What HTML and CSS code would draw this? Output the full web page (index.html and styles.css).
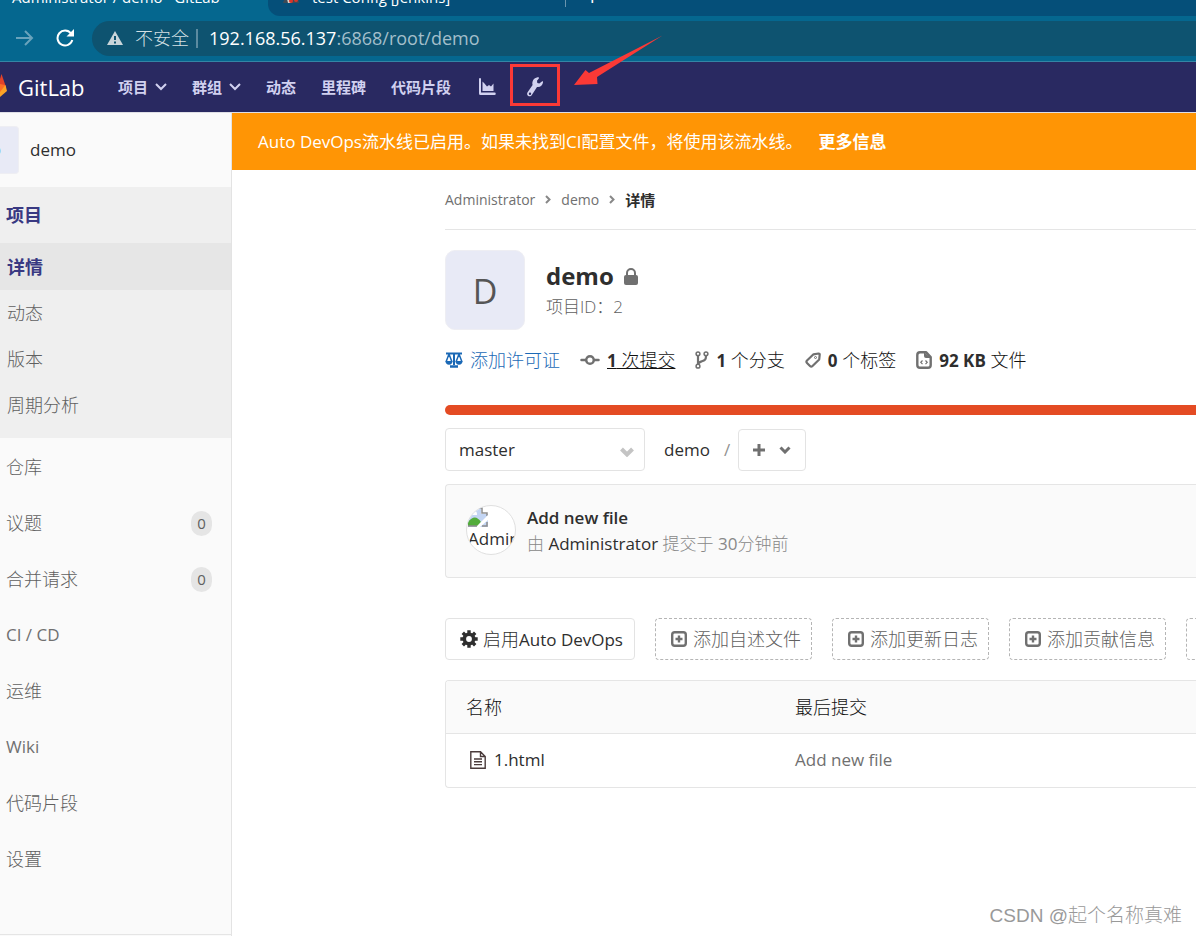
FILE: index.html
```
<!DOCTYPE html>
<html lang="zh-CN">
<head>
<meta charset="utf-8">
<title>Administrator / demo · GitLab</title>
<link rel="stylesheet" href="styles.css">
</head>
<body>
<div class="browser">
  <div class="tabs">
    <div class="tab tab-active"><span class="tab-title">Administrator / demo · GitLab</span></div>
    <div class="tab-rest">
      <div class="tab">
        <svg class="tab-icon" width="18" height="18" viewBox="0 0 18 18"><path fill="#3d4a56" d="M1 17c1-4 3-5 4-6h8c3 1 4 3 4 6z"/><path fill="#d9d2cb" d="M5 13l3-2 2 2-1 4H6z"/><circle cx="9" cy="15" r="2" fill="#d8352a"/><circle cx="14" cy="14" r="2" fill="#d8352a"/></svg>
        <span class="tab-title">test Config [Jenkins]</span>
      </div>
      <span class="tab-plus">+</span>
    </div>
  </div>
  <div class="address-row">
    <svg class="nav-forward" width="18" height="16" viewBox="0 0 18 16" fill="none" stroke="#69a3bc" stroke-width="2"><path d="M0 8h16M9 1l7 7-7 7"/></svg>
    <svg class="nav-reload" width="18" height="18" viewBox="0 0 18 18"><path fill="none" stroke="#fff" stroke-width="2" d="M15 4.500A7.500 7.500 0 1 0 16.300 11"/><path fill="#fff" d="M18 0v7.500h-7.500z"/></svg>
    <div class="address">
      <svg width="16" height="14" viewBox="0 0 16 14"><path fill="#c9d5da" d="M8 0l8 14H0z"/><path stroke="#0e5370" stroke-width="2" d="M8 5v4M8 10.500v2"/></svg>
      <span class="insecure">不安全</span>
      <span class="address-sep"></span>
      <span class="url"><b>192.168.56.137</b>:6868/root/demo</span>
    </div>
  </div>
</div>

<header class="navbar">
  <svg class="logo" width="7" height="26" viewBox="0 0 7 26"><path fill="#e24329" d="M0 5L1.500 0 6 13 0 14z"/><path fill="#fc6d26" d="M0 10l5 1 1 4-6 7z"/><path fill="#fca326" d="M5.500 11L7 17 0 23v-5z"/></svg>
  <span class="brand">GitLab</span>
  <nav class="top-links">
    <button class="nav-item">项目<svg width="12" height="8" viewBox="0 0 12 8"><path d="M1 1l5 5 5-5"/></svg></button>
    <button class="nav-item">群组<svg width="12" height="8" viewBox="0 0 12 8"><path d="M1 1l5 5 5-5"/></svg></button>
    <a class="nav-item" href="#">动态</a>
    <a class="nav-item" href="#">里程碑</a>
    <a class="nav-item" href="#">代码片段</a>
    <a class="nav-item chart" href="#" aria-label="统计"><svg class="filled" width="18" height="18" viewBox="0 0 18 18"><path d="M1 1a1 1 0 0 1 2 0v13.500h13.500a1 1 0 0 1 0 2.500H2.500Q1 17 1 15.500zM4.500 3.500l2 2 2.500 3 2-1.500 2 1.500 2.500-3V13h-11z"/></svg></a>
    <a class="nav-item admin" href="#" aria-label="管理"><svg class="filled" width="20" height="20" viewBox="0 0 20 20"><path fill-rule="evenodd" d="M12.500.3c1.300-.3 1.900.5 1.300 1.300L12 3.700l.3 2.200 2 .7 2.600-2.200c.7-.5 1.300 0 1.100 1.100-.5 3-2.800 4.900-6 4.400L7 17.700c-.9 1.500-2.300 2-3.700 1.200-1.300-.8-1.600-2.200-.7-3.600L7.600 8C6.600 4.500 8.700 1.100 12.500.3zM5 15.500a1.200 1.200 0 1 0 0 2.400 1.200 1.200 0 0 0 0-2.400z"/></svg></a>
  </nav>
</header>

<div class="page">
  <aside class="sidebar">
    <a class="context" href="#"><span class="context-avatar">D</span><span>demo</span></a>
    <nav>
      <div class="side-group">
        <a class="side-link side-head" href="#">项目</a>
        <a class="side-sub current" href="#">详情</a>
        <a class="side-sub" href="#">动态</a>
        <a class="side-sub" href="#">版本</a>
        <a class="side-sub" href="#">周期分析</a>
      </div>
      <div class="side-rest">
        <a class="side-link" href="#">仓库</a>
        <a class="side-link" href="#">议题<span class="count">0</span></a>
        <a class="side-link" href="#">合并请求<span class="count">0</span></a>
        <a class="side-link latin" href="#">CI / CD</a>
        <a class="side-link" href="#">运维</a>
        <a class="side-link latin" href="#">Wiki</a>
        <a class="side-link" href="#">代码片段</a>
        <a class="side-link" href="#">设置</a>
      </div>
    </nav>
    <div class="side-footer"></div>
  </aside>

  <main class="main">
    <div class="banner">Auto DevOps流水线已启用。如果未找到CI配置文件，将使用该流水线。<a href="#">更多信息</a></div>
    <div class="content">
      <nav class="crumbs">
        <a href="#">Administrator</a>
        <svg width="6" height="9" viewBox="0 0 6 9"><path d="M1 1l3.500 3.500L1 8"/></svg>
        <a href="#">demo</a>
        <svg width="6" height="9" viewBox="0 0 6 9"><path d="M1 1l3.500 3.500L1 8"/></svg>
        <strong>详情</strong>
      </nav>

      <section class="project">
        <div class="avatar">D</div>
        <div>
          <h1>demo <svg width="14" height="17" viewBox="0 0 14 17"><path fill="none" stroke="#707070" stroke-width="2" d="M3 8V5a4 4 0 0 1 8 0v3"/><rect y="7" width="14" height="10" rx="2" fill="#707070"/></svg></h1>
          <p class="project-id">项目ID：2</p>
        </div>
      </section>

      <div class="stats">
        <a class="license" href="#"><svg width="18" height="16" viewBox="0 0 18 16"><g fill="none" stroke="#1b69b6"><path stroke-width="2" d="M1 1.500h16M9 1v12"/><path stroke-width="2.500" d="M5 14.500h8"/><path stroke-width="1.500" d="M4 2L1.200 9.500M4 2l2.800 7.500M14 2l-2.800 7.500M14 2l2.800 7.500"/></g><path fill="#1b69b6" d="M.3 9h7.400q-.5 3.700-3.700 3.700T.3 9zM10.300 9h7.400q-.5 3.700-3.700 3.700T10.300 9z"/></svg>添加许可证</a>
        <a class="stat underlined" href="#"><svg width="20" height="12" viewBox="0 0 20 12" fill="none" stroke="#707070" stroke-width="2.500"><circle cx="10" cy="6" r="3.800"/><path stroke-width="2.500" stroke-linecap="round" d="M1.500 6H5M15 6h3.500"/></svg><span><b>1</b> 次提交</span></a>
        <a class="stat" href="#"><svg width="14" height="18" viewBox="0 0 14 18" fill="none" stroke="#707070"><circle cx="3" cy="2.800" r="1.900" stroke-width="1.500"/><circle cx="11" cy="2.800" r="1.900" stroke-width="1.500"/><circle cx="3" cy="15.200" r="1.900" stroke-width="1.500"/><path stroke-width="2.200" d="M3 5v8M11 5c0 4-1.500 4.500-4 5.200-2.500.8-3.500 1-3.900 3"/></svg><span><b>1</b> 个分支</span></a>
        <a class="stat" href="#"><svg width="16" height="16" viewBox="0 0 16 16" fill="none" stroke="#707070" stroke-width="2.200"><path stroke-linejoin="round" d="M8.500 2.300L13.500 1.500c.9-.1 1.300.4 1.200 1.200L14.200 7.500 7.500 14c-.8.8-1.800.7-2.500 0L2 11c-.7-.7-.7-1.700 0-2.500z"/><circle cx="10.500" cy="5.500" r="1" stroke-width="1"/></svg><span><b>0</b> 个标签</span></a>
        <a class="stat" href="#"><svg width="16" height="18" viewBox="0 0 16 18" fill="none" stroke="#707070" stroke-width="2.400"><path stroke-linejoin="round" d="M4 1.200h6L14.700 6v8q0 2.800-2.700 2.800H4q-2.700 0-2.700-2.800V4Q1.300 1.200 4 1.200z"/><path fill="#707070" stroke="none" d="M8 1l7 6H10q-2 0-2-2z"/><path stroke-width="1.200" d="M6.500 9.500l-1.700 1.800 1.700 1.800M9.500 9.500l1.700 1.800-1.700 1.800"/></svg><span><b>92 KB</b> 文件</span></a>
      </div>

      <div class="language-bar"></div>

      <div class="tree-controls">
        <label class="branch"><select aria-label="分支"><option>master</option></select><svg width="14" height="10" viewBox="0 0 14 10"><path d="M1.500 2L7 7.500 12.500 2"/></svg></label>
        <a class="path" href="#">demo</a>
        <span class="slash">/</span>
        <button class="add-button" aria-label="添加"><svg width="12" height="12" viewBox="0 0 12 12"><path d="M6 0v12M0 6h12"/></svg><svg width="12" height="8" viewBox="0 0 12 8"><path d="M1.500 1.500L6 6l4.500-4.500"/></svg></button>
      </div>

      <section class="commit">
        <div class="commit-avatar">
          <svg width="20" height="20" viewBox="0 0 20 20"><path fill="#c3d5f3" d="M0 0h14l6 6v14H0z"/><path fill="#fff" d="M3 7a3 3 0 0 1 6 0v1H2zM13 0h2l5 5v2h-7z"/><path fill="none" stroke="#8d8d8d" stroke-width="1.500" d="M0 1h14v5h5v3"/><path fill="#52ac3b" d="M0 19v-4q7-9 13 0l-3 4z"/><path fill="#fff" d="M20 8v5l-8 7H8z"/><path fill="none" stroke="#8d8d8d" stroke-width="1.500" d="M0 19h9M14 19h5v-4"/></svg>
          <span>Admin</span>
        </div>
        <div>
          <a class="commit-title" href="#">Add new file</a>
          <p class="commit-meta"><span>由</span> <a href="#">Administrator</a> <span>提交于</span> 30<span>分钟前</span></p>
        </div>
      </section>

      <div class="actions">
        <a class="action solid" href="#"><svg width="18" height="18" viewBox="0 0 18 18"><circle cx="9" cy="9" r="4.700" fill="none" stroke="#2e2e2e" stroke-width="3.600"/><path stroke="#2e2e2e" stroke-width="3.400" d="M9 .3v3M9 14.700v3M.3 9h3M14.700 9h3M2.800 2.800l2.200 2.200M13 13l2.200 2.200M2.800 15.200L5 13M13 5l2.200-2.200"/></svg><span>启用<span class="latin">Auto DevOps</span></span></a>
        <a class="action" href="#"><svg width="16" height="16" viewBox="0 0 16 16"><rect x="1.200" y="1.200" width="13.600" height="13.600" rx="2.500"/><path d="M8 4.500v7M4.500 8h7"/></svg>添加自述文件</a>
        <a class="action" href="#"><svg width="16" height="16" viewBox="0 0 16 16"><rect x="1.200" y="1.200" width="13.600" height="13.600" rx="2.500"/><path d="M8 4.500v7M4.500 8h7"/></svg>添加更新日志</a>
        <a class="action" href="#"><svg width="16" height="16" viewBox="0 0 16 16"><rect x="1.200" y="1.200" width="13.600" height="13.600" rx="2.500"/><path d="M8 4.500v7M4.500 8h7"/></svg>添加贡献信息</a>
        <a class="action" href="#" aria-label="添加"><svg width="16" height="16" viewBox="0 0 16 16"><rect x="1.200" y="1.200" width="13.600" height="13.600" rx="2.500"/><path d="M8 4.500v7M4.500 8h7"/></svg></a>
      </div>

      <div class="files">
        <table>
          <thead><tr><th class="name-col">名称</th><th>最后提交</th></tr></thead>
          <tbody><tr>
            <td><a class="file" href="#"><svg width="16" height="18" viewBox="0 0 16 18" fill="none" stroke="#4a3b3b" stroke-width="1.400"><path d="M.8.8h9.700L15.200 5.500v11.700H.8zM10.500.8v4.700h4.700M4 8h8M4 10.800h8M4 13.600h8"/></svg>1.html</a></td>
            <td class="muted">Add new file</td>
          </tr></tbody>
        </table>
      </div>
    </div>
  </main>
</div>

<svg class="mark" width="160" height="80" viewBox="0 0 160 80"><rect x="6.500" y="35.500" width="47" height="39" fill="none" stroke="#fb3936" stroke-width="3"/><path fill="#fb3936" d="M157.500 5.500L92 47l.5 7L69 55l11.500-15 3.500 3z"/></svg>
<div class="watermark">CSDN @起个名称真难</div>
</body>
</html>
```
FILE: styles.css
```
* { box-sizing: border-box; }
body {
  margin: 0;
  min-height: 100vh;
  display: flex;
  flex-direction: column;
  position: relative;
  overflow: hidden;
  background: #fff;
  color: #2e2e2e;
  font: 17px/26px "Open Sans", "Noto Sans CJK SC", sans-serif;
}
a { color: inherit; text-decoration: none; }
button { font: inherit; color: inherit; cursor: pointer; }
h1, p { margin: 0; }
svg { flex: none; }

/* Browser frame */
.browser { height: 62px; background: #05678f; border-bottom: 1px solid #3485a5; color: #fff; }
.tabs { display: flex; height: 16px; overflow: hidden; font-size: 15px; line-height: 20px; }
.tab { display: flex; align-items: center; gap: 12px; height: 20px; margin-top: -13px; }
.tab-active { width: 268px; padding-left: 12px; }
.tab-rest { flex: 1; display: flex; background: #054f79; border-bottom-left-radius: 12px; padding-left: 14px; }
.tab-rest .tab { width: 284px; border-right: 1px solid #6a95ae; }
.tab-icon { margin-top: -4px; }
.tab-plus { margin: -14px 0 0 20px; font-size: 22px; }
.address-row { display: flex; align-items: center; height: 44px; padding-left: 16px; }
.nav-reload { margin-left: 22px; }
.address { flex: 1; display: flex; align-items: center; height: 35px; margin: 0 -20px 0 18px; padding-left: 15px; border-radius: 18px; background: #0e5370; }
.insecure { margin-left: 12px; font-size: 18px; font-weight: 300; color: #d5e0e4; }
.address-sep { width: 2px; height: 19px; margin: 0 11px 0 7px; background: #5c8ba0; }
.url { font-size: 18px; color: #a3bfcb; }
.url b { font-weight: 400; color: #fff; }

/* GitLab navigation */
.navbar { display: flex; align-items: center; height: 50px; background: #292961; color: #d1d1f0; }
.brand { width: 100px; margin-left: 11px; font-size: 22px; font-weight: 500; color: #fff; }
.top-links { display: flex; align-items: center; gap: 25px; font-size: 15px; font-weight: 700; }
.nav-item { display: flex; align-items: center; gap: 7px; padding: 0; border: 0; background: none; }
.nav-item svg { fill: none; stroke: #d1d1f0; stroke-width: 2; }
.nav-item svg.filled { fill: #d1d1f0; stroke: none; }
.chart { margin-left: 2px; }
.admin { margin-left: 4px; }

/* Page frame */
.page { flex: 1; display: flex; border-top: 1px solid #dfdfe6; }
.sidebar { flex: none; width: 232px; display: flex; flex-direction: column; background: #fafafa; border-right: 1px solid #e3e3e3; color: #606060; }
.context { display: flex; align-items: center; gap: 11px; height: 74px; color: #2e2e2e; }
.context-avatar { width: 19px; height: 48px; overflow: hidden; border: 1px solid #eeeef3; border-width: 1px 1px 1px 0; border-radius: 0 4px 4px 0; background: #e8eaf6; color: #1b69b6; line-height: 48px; direction: rtl; text-indent: 17px; }
.side-group { background: #efefef; padding-bottom: 10px; }
.side-rest { padding-top: 1px; }
.side-link { display: flex; align-items: center; height: 56px; padding: 0 19px 0 6px; font-size: 18px; font-weight: 300; }
.side-sub { display: flex; align-items: center; height: 46px; padding-left: 7px; font-size: 18px; font-weight: 300; }
.side-head, .current { font-weight: 700; color: #393982; }
.current { height: 47px; background: #e6e6e6; }
.side-link.latin { font-size: 17px; font-weight: 400; color: #707070; }
.count { margin-left: auto; width: 21px; height: 25px; border-radius: 12px; background: #e5e5e5; font-size: 15px; font-weight: 400; line-height: 25px; text-align: center; }
.side-footer { margin-top: auto; height: 2px; border-top: 1px solid #e5e5e5; }

.main { flex: 1; min-width: 0; overflow: hidden; }
.banner { height: 57px; padding-left: 26px; background: #ff9505; color: #fff; font-size: 17px; line-height: 57px; white-space: nowrap; }
.banner a { margin-left: 16px; font-weight: 700; }
.content { padding-left: 213px; }
.crumbs { display: flex; align-items: center; gap: 10px; height: 60px; border-bottom: 1px solid #e5e5e5; font-size: 14px; color: #707070; }
.crumbs svg { fill: none; stroke: #888; stroke-width: 2; }
.crumbs strong { font-size: 15px; color: #2e2e2e; }

.project { display: flex; gap: 21px; padding-top: 20px; }
.avatar { width: 80px; height: 80px; border: 1px solid #eeeef3; border-radius: 10px; background: #e8eaf6; color: #555; font-size: 34px; line-height: 80px; text-align: center; }
h1 { display: flex; align-items: center; gap: 10px; margin-top: 10px; font-size: 24px; line-height: 32px; }
.project-id { color: #606060; font-size: 17px; line-height: 30px; font-weight: 300; }

.stats { display: flex; align-items: center; gap: 20px; height: 44px; margin-top: 8px; color: #111; font-size: 18px; white-space: nowrap; }
.stats b { font-size: 17px; font-weight: 700; color: #2e2e2e; }
.license, .stat { display: flex; align-items: center; gap: 7px; font-weight: 300; }
.license { color: #1b69b6; }
.underlined span { text-decoration: underline; }
.language-bar { height: 10px; margin-top: 23px; border-radius: 5px 0 0 5px; background: #e44b23; }

.tree-controls { display: flex; align-items: center; height: 43px; margin-top: 13px; }
.branch { position: relative; width: 200px; }
.branch select { width: 100%; height: 43px; padding: 0 13px; appearance: none; border: 1px solid #e3e3e3; border-radius: 4px; background: #fff; color: #2e2e2e; font: inherit; }
.branch svg { position: absolute; right: 11px; top: 19px; fill: none; stroke: #c4c4c4; stroke-width: 4; pointer-events: none; }
.path { margin-left: 19px; }
.slash { margin: 0 8px 0 14px; color: #919191; }
.add-button { display: flex; align-items: center; justify-content: center; gap: 14px; width: 68px; height: 42px; padding: 0; border: 1px solid #e3e3e3; border-radius: 4px; background: #fff; }
.add-button svg { fill: none; stroke: #707070; stroke-width: 3; }

.commit { display: flex; gap: 11px; height: 94px; margin-top: 13px; padding: 20px; border: 1px solid #e5e5e5; border-right: 0; border-radius: 4px 0 0 4px; background: #fafafa; }
.commit-avatar { width: 50px; height: 50px; overflow: hidden; padding: 1px; border: 1px solid #e0e0e0; border-radius: 50%; background: #fff; }
.commit-avatar svg { display: block; }
.commit-avatar span { display: block; line-height: 24px; }
.commit-title { font-weight: 600; }
.commit-meta { color: #888; }
.commit-meta span { font-weight: 300; }
.commit-meta a { color: #2e2e2e; }

.actions { display: flex; gap: 20px; margin-top: 40px; white-space: nowrap; }
.action { flex: none; display: flex; align-items: center; gap: 6px; height: 42px; padding: 0 10px 0 15px; border: 1px dashed #b5b5b5; border-radius: 4px; color: #606060; font-size: 18px; font-weight: 300; }
.action svg { fill: none; stroke: #707070; stroke-width: 2.400; }
.solid { padding: 0 11px 0 14px; gap: 5px; border: 1px solid #e3e3e3; color: #2e2e2e; }
.solid .latin { font-size: 17px; font-weight: 400; }

.files { margin-top: 20px; border: 1px solid #e5e5e5; border-right: 0; border-radius: 4px 0 0 4px; overflow: hidden; }
table { width: 100%; border-collapse: collapse; }
th, td { height: 54px; padding: 0 20px; text-align: left; }
th { height: 52px; background: #fafafa; border-bottom: 1px solid #e5e5e5; color: #111; font-size: 18px; font-weight: 300; }
.name-col { width: 329px; }
.file { display: flex; align-items: center; gap: 8px; padding-left: 4px; }
.muted { color: #707070; }

/* Overlays */
.mark { position: absolute; left: 505px; top: 30px; pointer-events: none; }
.watermark { position: absolute; right: 14px; bottom: 6px; color: #999; font: 300 19px/28px "Liberation Sans", "Noto Sans CJK SC", sans-serif; }
```
